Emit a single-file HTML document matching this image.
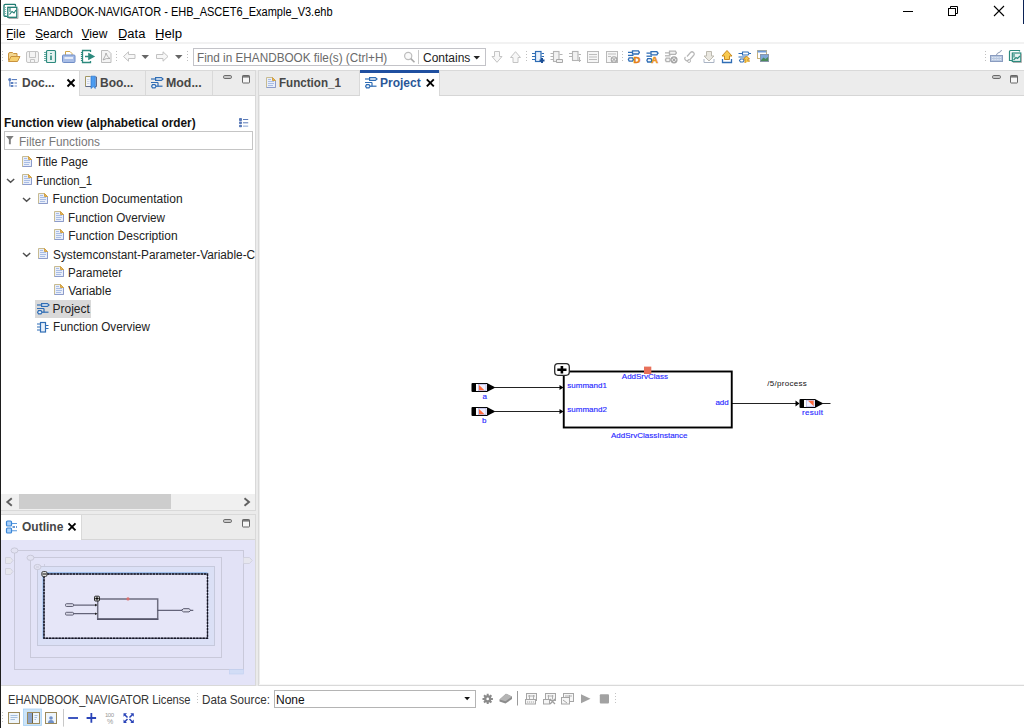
<!DOCTYPE html>
<html><head><meta charset="utf-8">
<style>
*{box-sizing:border-box;margin:0;padding:0}
html,body{width:1024px;height:728px;overflow:hidden;background:#fff}
body{position:relative;font-family:"Liberation Sans",sans-serif;font-size:12px;color:#000}
.a{position:absolute}
.t{position:absolute;white-space:nowrap;transform-origin:0 0;line-height:1;font-size:12px}
.b{font-weight:bold}
.ul{position:absolute;height:1px;background:#000}
svg{position:absolute;overflow:visible}
.tab{color:#474747}
</style></head><body>

<!-- window borders -->
<div class="a" style="left:0;top:0;width:1px;height:728px;background:#1e1e1e"></div>
<div class="a" style="left:1023px;top:0;width:1px;height:24px;background:#0b2255"></div>

<!-- title bar -->
<div class="t" style="left:23.7px;top:6px;transform:scaleX(0.918)">EHANDBOOK-NAVIGATOR - EHB_ASCET6_Example_V3.ehb</div>

<!-- menu bar -->
<div class="a" style="left:1px;top:24px;width:29px;height:1px;background:#e6e6e6"></div>
<div class="t" style="left:6px;top:28px">File</div>
<div class="t" style="left:35px;top:28px">Search</div>
<div class="t" style="left:81.5px;top:28px">View</div>
<div class="t" style="left:118px;top:28px;transform:scaleX(1.08)">Data</div>
<div class="t" style="left:155px;top:28px;transform:scaleX(1.1)">Help</div>
<div class="ul" style="left:7px;top:39px;width:6px"></div>
<div class="ul" style="left:36px;top:39px;width:7px"></div>
<div class="ul" style="left:82px;top:39px;width:7px"></div>
<div class="ul" style="left:119px;top:39px;width:7px"></div>
<div class="ul" style="left:156px;top:39px;width:7px"></div>
<div class="a" style="left:1px;top:42px;width:1023px;height:2px;background:#f2f2f2"></div>

<!-- toolbar search -->
<div class="a" style="left:193px;top:48px;width:293px;height:18px;border:1px solid #c3c3c8;background:#fff"></div>
<div class="a" style="left:418px;top:50px;width:1px;height:14px;background:#c8c8c8"></div>
<div class="t" style="left:197px;top:52px;color:#6a6a6a;transform:scaleX(0.979)">Find in EHANDBOOK file(s) (Ctrl+H)</div>
<div class="t" style="left:423px;top:52px;color:#222">Contains</div>

<!-- workbench background -->
<div class="a" style="left:1px;top:70px;width:1023px;height:616px;background:#ebebeb"></div>

<!-- left panel (Doc) -->
<div class="a" style="left:1px;top:70px;width:255px;height:441px;border:1px solid #d9d9d9;border-left:none;background:#fff"></div>
<div class="a" style="left:1px;top:71px;width:254px;height:25px;background:#ececec;border-bottom:1px solid #d6d6d6"></div>
<div class="a" style="left:1px;top:71px;width:78px;height:25px;background:#fff"></div>
<div class="a" style="left:79px;top:71px;width:1px;height:24px;background:#d9d9d9"></div>
<div class="a" style="left:145px;top:71px;width:1px;height:24px;background:#d9d9d9"></div>
<div class="a" style="left:212px;top:71px;width:1px;height:24px;background:#d9d9d9"></div>
<div class="t b tab" style="left:22px;top:77px">Doc...</div>
<div class="t b tab" style="left:100px;top:77px">Boo...</div>
<div class="t b tab" style="left:165.5px;top:77px;transform:scaleX(1.03)">Mod...</div>

<div class="t b" style="left:3.7px;top:117px;color:#111;transform:scaleX(0.984)">Function view (alphabetical order)</div>
<div class="a" style="left:4px;top:131px;width:249px;height:19px;border:1px solid #c5c5c5"></div>
<div class="t" style="left:18.8px;top:136px;color:#777;transform:scaleX(0.988)">Filter Functions</div>

<div class="a" style="left:35px;top:300px;width:56px;height:18px;background:#d9d9d9"></div>
<div class="t" style="left:36.3px;top:156px;color:#222;transform:scaleX(0.97)">Title Page</div>
<div class="t" style="left:36.3px;top:175px;color:#222;transform:scaleX(0.945)">Function_1</div>
<div class="t" style="left:52.5px;top:193px;color:#222">Function Documentation</div>
<div class="t" style="left:68.2px;top:212px;color:#222;transform:scaleX(0.976)">Function Overview</div>
<div class="t" style="left:68.2px;top:229.5px;color:#222">Function Description</div>
<div class="a" style="left:52px;top:246px;width:203px;height:16px;overflow:hidden"><div class="t" style="left:0.5px;top:3px;color:#222;transform:scaleX(0.985)">Systemconstant-Parameter-Variable-Class</div></div>
<div class="t" style="left:68.2px;top:266.5px;color:#222;transform:scaleX(0.964)">Parameter</div>
<div class="t" style="left:68.2px;top:284.5px;color:#222">Variable</div>
<div class="t" style="left:52.5px;top:303px;color:#222">Project</div>
<div class="t" style="left:52.5px;top:321px;color:#222;transform:scaleX(0.976)">Function Overview</div>

<!-- h scrollbar -->
<div class="a" style="left:1px;top:494px;width:254px;height:16px;background:#f0f0f0"></div>
<div class="a" style="left:19px;top:494px;width:152px;height:15px;background:#cdcdcd"></div>

<!-- right panel -->
<div class="a" style="left:258px;top:70px;width:766px;height:616px;border-left:1px solid #d9d9d9;border-top:1px solid #d9d9d9;border-bottom:1px solid #d9d9d9;background:#fff"></div>
<div class="a" style="left:259px;top:96px;width:1px;height:589px;background:#ededed"></div>
<div class="a" style="left:259px;top:684px;width:765px;height:1px;background:#f6f6f6"></div>
<div class="a" style="left:259px;top:71px;width:765px;height:25px;background:#ececec;border-bottom:1px solid #d6d6d6"></div>
<div class="a" style="left:359px;top:71px;width:1px;height:24px;background:#d9d9d9"></div>
<div class="a" style="left:360px;top:70px;width:79px;height:26px;background:#fff"></div>
<div class="a" style="left:360px;top:70px;width:79px;height:3px;background:#1f4fa0"></div>
<div class="a" style="left:439px;top:71px;width:1px;height:24px;background:#d9d9d9"></div>
<div class="t b tab" style="left:279.4px;top:77px;transform:scaleX(0.968)">Function_1</div>
<div class="t b" style="left:380px;top:77px;color:#2b5797">Project</div>

<!-- outline panel -->
<div class="a" style="left:1px;top:514px;width:255px;height:172px;border:1px solid #d9d9d9;border-left:none;background:#e4e4f8"></div>
<div class="a" style="left:1px;top:515px;width:254px;height:25px;background:#ececec;border-bottom:1px solid #d6d6d6"></div>
<div class="a" style="left:1px;top:515px;width:80px;height:25px;background:#fff"></div>
<div class="a" style="left:81px;top:515px;width:1px;height:24px;background:#d9d9d9"></div>
<div class="t b tab" style="left:22px;top:521px">Outline</div>

<!-- status bar -->
<div class="t" style="left:7.5px;top:694px;color:#333;transform:scaleX(0.928)">EHANDBOOK_NAVIGATOR License</div>
<div class="t" style="left:202px;top:694px;color:#333;transform:scaleX(0.971)">Data Source:</div>
<div class="a" style="left:274px;top:690px;width:202px;height:18px;border:1px solid #b4b4b4;background:#fff"></div>
<div class="t" style="left:276px;top:694px;color:#111">None</div>


<svg width="1024" height="728" viewBox="0 0 1024 728" style="left:0;top:0" fill="none">
<!-- app icon -->
<g stroke="#1f7b71" stroke-width="1.3">
<path d="M15.5 6.5 V5 Q15.5 4.3 14.8 4.3 H5.2 Q4 4.3 4 5.5 V15.5 Q4 16.3 5 16.3 H7"/>
<rect x="7.8" y="7.3" width="9" height="10" fill="#fff"/>
<path d="M10 8 V12 M9.5 14.5 L12 11.5 L14 13 L16 10" stroke-width="1.1"/>
</g>
<path d="M8.5 18.5 H18 V8.5" stroke="#b0b0b0" stroke-width="1"/>
<path d="M5.5 7 V16" stroke="#7fbcb4" stroke-width="1.2" stroke-dasharray="1 1"/>

<!-- window controls -->
<path d="M903 11.5 H913" stroke="#000" stroke-width="1"/>
<rect x="948.5" y="8.5" width="7" height="7" stroke="#000" stroke-width="1"/>
<path d="M950.5 8.5 V6.5 H957.5 V13.5 H955.5" stroke="#000" stroke-width="1"/>
<path d="M994 6 L1004 16 M1004 6 L994 16" stroke="#000" stroke-width="1.1"/>

<!-- ===== toolbar icons ===== -->
<g fill="#c0c0c0">
<rect x="2" y="51" width="1" height="1"/><rect x="2" y="54" width="1" height="1"/><rect x="2" y="57" width="1" height="1"/><rect x="2" y="60" width="1" height="1"/>
<rect x="116" y="51" width="1" height="1"/><rect x="116" y="54" width="1" height="1"/><rect x="116" y="57" width="1" height="1"/><rect x="116" y="60" width="1" height="1"/>
<rect x="187" y="51" width="1" height="1"/><rect x="187" y="54" width="1" height="1"/><rect x="187" y="57" width="1" height="1"/><rect x="187" y="60" width="1" height="1"/>
<rect x="526" y="51" width="1" height="1"/><rect x="526" y="54" width="1" height="1"/><rect x="526" y="57" width="1" height="1"/><rect x="526" y="60" width="1" height="1"/>
<rect x="622" y="51" width="1" height="1"/><rect x="622" y="54" width="1" height="1"/><rect x="622" y="57" width="1" height="1"/><rect x="622" y="60" width="1" height="1"/>
<rect x="985" y="51" width="1" height="1"/><rect x="985" y="54" width="1" height="1"/><rect x="985" y="57" width="1" height="1"/><rect x="985" y="60" width="1" height="1"/>
</g>
<!-- folder -->
<path d="M8.5 60.5 V54 Q8.5 52.5 10 52.5 H12.5 L13.5 53.5 H17 V56" fill="#f2d58e" stroke="#c9923e"/>
<path d="M8.5 61.5 L11 56.5 H20 L17.5 61.5 Z" fill="#f6cf6e" stroke="#c9923e"/>
<!-- save (disabled) -->
<rect x="26.5" y="51.5" width="12" height="11" rx="1.5" fill="#f4f4f4" stroke="#c4c4c4"/>
<path d="M29.5 52 V57.5 H35.5 V52 M30.5 62 V59.5 H34.5 V62" stroke="#c4c4c4"/>
<!-- notebook teal -->
<rect x="46.5" y="50.5" width="9" height="12" rx="1" fill="#e6f3f1" stroke="#2d8a7e" stroke-width="1.2"/>
<path d="M45 52 V61" stroke="#2d8a7e" stroke-width="1.4" stroke-dasharray="1 1"/>
<path d="M51 53 V54 M51 55.5 V60" stroke="#2d8a7e" stroke-width="1.6"/>
<!-- print -->
<path d="M65.5 51.5 H70 L72 53.5 V57 H65.5 Z" fill="#fff" stroke="#d1a84b"/>
<path d="M62.5 56 Q62.5 55 63.5 55 H74 Q75 55 75 56 V61.5 Q75 62.5 74 62.5 H63.5 Q62.5 62.5 62.5 61.5 Z" fill="#a8bde6" stroke="#6f8dc6"/>
<rect x="64.5" y="57" width="8.5" height="2" fill="#e6ecf8"/>
<!-- export teal -->
<path d="M90.5 52 V50.5 H82.5 V62.5 H90.5 V61" stroke="#2d8a7e" stroke-width="1.3"/>
<path d="M81.5 52 V61" stroke="#2d8a7e" stroke-width="1.2" stroke-dasharray="1 1"/>
<path d="M85 56.5 H90 M89 54 L93.5 56.5 L89 59 Z" stroke="#2d8a7e" stroke-width="1.6" fill="#2d8a7e"/>
<!-- pdf gray -->
<path d="M101.5 50.5 H108 L111 53.5 V62.5 H101.5 Z" fill="#f5f5f5" stroke="#bdbdbd"/>
<path d="M103 60 Q106 55 106 53 Q107 57 110 58.5 Q106 58 103 60" stroke="#a0a0a0" stroke-width="0.8"/>
<!-- back / fwd arrows -->
<path d="M123.5 56.5 L128.5 51.8 V54.5 H135 V58.5 H128.5 V61.2 Z" fill="#f7f7f7" stroke="#c2c2c2"/>
<path d="M141.5 55 H149 L145.25 59 Z" fill="#666"/>
<path d="M168 56.5 L163 51.8 V54.5 H156.5 V58.5 H163 V61.2 Z" fill="#f7f7f7" stroke="#c2c2c2"/>
<path d="M175 55 H182.5 L178.75 59 Z" fill="#666"/>
<!-- search magnifier -->
<circle cx="408.2" cy="56" r="3.6" stroke="#bdbdbd" stroke-width="1.2" fill="#fafafa"/>
<path d="M410.8 58.6 L414.5 62.3" stroke="#a8a8a8" stroke-width="1.6"/>
<!-- contains dropdown -->
<path d="M473.5 56 H480 L476.75 59.5 Z" fill="#222"/>
<!-- down/up arrows -->
<path d="M494.5 51.5 H499.5 V56.5 H502 L497 62.3 L492 56.5 H494.5 Z" fill="#f7f7f7" stroke="#c4c4c4"/>
<path d="M513 62.5 H518 V57.5 H520.5 L515.5 51.7 L510.5 57.5 H513 Z" fill="#f7f7f7" stroke="#c4c4c4"/>
<!-- chip blue with arrow -->
<rect x="535.5" y="51.5" width="5.5" height="10" fill="#e7f0fb" stroke="#2f6db5" stroke-width="1.2"/>
<path d="M532 53.5 H535 M532 56.5 H535 M532 59.5 H535 M541.5 53.5 H544 M541.5 56.5 H544" stroke="#2f6db5" stroke-width="1.2"/>
<path d="M539.5 60.5 H544.5 M542 58 V63 " stroke="#1c4f95" stroke-width="2"/>
<!-- chip gray 1 -->
<rect x="553.5" y="51.5" width="5.5" height="10" fill="#f2f2f2" stroke="#b4b4b4" stroke-width="1.1"/>
<path d="M550.5 53.5 H553 M550.5 56.5 H553 M550.5 59.5 H553 M559.5 54.5 H562.5" stroke="#b4b4b4" stroke-width="1.1"/>
<path d="M556.5 59.5 H562.5 V62.5 H556.5 Z" stroke="#a9a9a9" fill="#f0f0f0"/>
<!-- chip gray 2 -->
<rect x="572.5" y="51.5" width="5.5" height="9" fill="#f2f2f2" stroke="#b4b4b4" stroke-width="1.1"/>
<path d="M569 53.5 H572 M569 56.5 H572 M578.5 54.5 H581 M578 60.5 H581 M579.5 57 V62" stroke="#b4b4b4" stroke-width="1.1"/>
<!-- list gray -->
<rect x="587.5" y="51.5" width="11" height="11" fill="#f6f6f6" stroke="#b9b9b9"/>
<path d="M589 54.5 H597 M589 57 H597 M589 59.5 H597" stroke="#bdbdbd" stroke-width="1"/>
<rect x="606.5" y="51.5" width="11" height="11" fill="#f6f6f6" stroke="#b9b9b9"/>
<path d="M608 54 H616 M608 56.5 H611" stroke="#bdbdbd" stroke-width="1"/>
<circle cx="614" cy="59.5" r="2.8" stroke="#a8a8a8" stroke-width="1.1" fill="#eee"/>
<path d="M612.2 57.7 L615.8 61.3 M615.8 57.7 L612.2 61.3" stroke="#a0a0a0"/>
<!-- diagram blue D -->
<g stroke="#2f6db5" stroke-width="1.3" fill="none"><path d="M628 52.400000000000006 H632.3 M638.8 52.400000000000006 H640"/><path d="M632.5 50.800000000000004 H638.4 L639.3 52.400000000000006 L638.4 54.0 H632.5 Z" fill="#f4f8fd"/><path d="M628 55.400000000000006 H633.5"/><path d="M629.2 57.800000000000004 H632.5 L633.3 59.5 L632.5 61.2 H629.2 L628.4 59.5 Z" fill="#f4f8fd"/></g><text x="633.6" y="62.8" font-family="Liberation Sans" font-weight="bold" font-size="9.5" fill="#e8841c" stroke="#e07a10" stroke-width="0.5">D</text>
<g stroke="#2f6db5" stroke-width="1.3" fill="none"><path d="M646.5 53.2 H650.8 M657.3 53.2 H658.5"/><path d="M651.0 51.6 H656.9 L657.8 53.2 L656.9 54.8 H651.0 Z" fill="#f4f8fd"/><path d="M646.5 56.2 H652.0"/><path d="M647.7 58.6 H651.0 L651.8 60.3 L651.0 62 H647.7 L646.9 60.3 Z" fill="#f4f8fd"/></g><text x="651.2" y="62.8" font-family="Liberation Sans" font-weight="bold" font-size="9.5" fill="#f2a232" stroke="#e88a18" stroke-width="0.5">A</text>
<g stroke="#b4b4b4" stroke-width="1.3" fill="none"><path d="M665 52.800000000000004 H669.3 M675.8 52.800000000000004 H677"/><path d="M669.5 51.2 H675.4 L676.3 52.800000000000004 L675.4 54.4 H669.5 Z" fill="#f2f2f2"/><path d="M665 55.800000000000004 H670.5"/><path d="M666.2 58.2 H669.5 L670.3 59.900000000000006 L669.5 61.6 H666.2 L665.4 59.900000000000006 Z" fill="#f2f2f2"/></g><circle cx="674" cy="59.8" r="3" stroke="#a4a4a4" stroke-width="1.2" fill="#e6e6e6"/><path d="M672.2 58 L675.8 61.6 M675.8 58 L672.2 61.6" stroke="#9a9a9a"/>
<!-- link gray -->
<path d="M687 56.5 L690.5 52.5 Q692 51 693.5 52.5 Q695 54 693.5 55.5 L690 59.5 M685.5 57 Q684 58.5 685.5 60 Q687 61.5 688.5 60" stroke="#b8b8b8" stroke-width="1.2"/>
<circle cx="689" cy="61" r="1.5" stroke="#b8b8b8"/>
<!-- download gray -->
<path d="M706.5 51.5 H711.5 V56 H714 L709 61 L704 56 H706.5 Z" fill="#e9e7e0" stroke="#bdbab0"/>
<path d="M704 59 V62.5 H714 V59" stroke="#aab4c4"/>
<!-- up orange -->
<path d="M724.5 59.5 V56 H722 L727 50.5 L732 56 H729.5 V59.5 Z" fill="#f8c94f" stroke="#c98a1f"/>
<path d="M722.5 59 V62.5 H731.5 V59" stroke="#2f6db5" stroke-width="1.3"/>
<!-- diagram blue + orange -->
<g stroke="#2f6db5" stroke-width="1.1">
<path d="M738.5 53.5 H742.5 M748.5 53.5 H751 M738.5 57 H746 M742.5 52 H748 L749 53.5 L748 55 H742.5 Z M739.5 60.5 L740.5 59 H743 L744 60.5 L743 62 H740.5 Z"/>
</g>
<path d="M745 63 V59 H743.5 L746.5 56 L749.5 59 H748 V61 H750" stroke="#c98a1f" fill="#f8c94f" stroke-width="1"/>
<!-- window picture -->
<rect x="757.5" y="50.5" width="9" height="8" fill="#fff" stroke="#c9b27a"/>
<rect x="757.5" y="50.5" width="9" height="2" fill="#6f9bd8"/>
<rect x="760.5" y="54.5" width="8" height="7" fill="#7fa7d8" stroke="#8a97aa"/>
<path d="M761 60 L763.5 57.5 L765.5 59 L768 57 V61 H761 Z" fill="#4a8a5a"/>
<!-- keyboard -->
<rect x="990.5" y="55.5" width="12" height="6" fill="#b8c8e0" stroke="#8a9cc0"/>
<path d="M992 57.5 H1001 M992 59.5 H1001" stroke="#e8eef8" stroke-width="0.8" stroke-dasharray="1 0.6"/>
<path d="M996.5 55 Q997 53 999 52.5 Q1001 52 1001.5 50" stroke="#7a8aa8" stroke-width="0.9"/>
<!-- app icon small -->
<g stroke="#2d8a7e" stroke-width="1.2">
<path d="M1019.5 51.5 V50.5 H1010.5 Q1009.5 50.5 1009.5 51.5 V60.5 H1012"/>
<rect x="1012.3" y="53" width="8.5" height="8.5" fill="#e6f3f1"/>
<path d="M1014 54 V57.5 M1013.5 60 L1016 57.5 L1017.5 58.5 L1020 56"/>
</g>
<path d="M1013 62.5 H1021.5 V54" stroke="#b0b0b0"/>
<!-- ===== panel icons ===== -->
<g transform="translate(22,156)"><path d="M0.5 0.5 H6.5 L9.5 3.5 V10.5 H0.5 Z" fill="#e9eef9" stroke="#c8bb90"/><path d="M0.5 10.5 H9.5 V4" stroke="#8c9ccc"/><path d="M6.5 0.5 V3.5 H9.5 Z" fill="#e5b65a" stroke="#d2a246"/><path d="M2 2.5 H5 M2 4.5 H8 M2 6.5 H8 M2 8.5 H7" stroke="#a9bde4" stroke-width="1"/></g><path d="M7.0 179.0 L10.6 182.2 L14.2 179.0" stroke="#505050" stroke-width="1.5"/><g transform="translate(22,174)"><path d="M0.5 0.5 H6.5 L9.5 3.5 V10.5 H0.5 Z" fill="#e9eef9" stroke="#c8bb90"/><path d="M0.5 10.5 H9.5 V4" stroke="#8c9ccc"/><path d="M6.5 0.5 V3.5 H9.5 Z" fill="#e5b65a" stroke="#d2a246"/><path d="M2 2.5 H5 M2 4.5 H8 M2 6.5 H8 M2 8.5 H7" stroke="#a9bde4" stroke-width="1"/></g><path d="M23.0 198.0 L26.6 201.2 L30.2 198.0" stroke="#505050" stroke-width="1.5"/><g transform="translate(38,193)"><path d="M0.5 0.5 H6.5 L9.5 3.5 V10.5 H0.5 Z" fill="#e9eef9" stroke="#c8bb90"/><path d="M0.5 10.5 H9.5 V4" stroke="#8c9ccc"/><path d="M6.5 0.5 V3.5 H9.5 Z" fill="#e5b65a" stroke="#d2a246"/><path d="M2 2.5 H5 M2 4.5 H8 M2 6.5 H8 M2 8.5 H7" stroke="#a9bde4" stroke-width="1"/></g><g transform="translate(54,211)"><path d="M0.5 0.5 H6.5 L9.5 3.5 V10.5 H0.5 Z" fill="#e9eef9" stroke="#c8bb90"/><path d="M0.5 10.5 H9.5 V4" stroke="#8c9ccc"/><path d="M6.5 0.5 V3.5 H9.5 Z" fill="#e5b65a" stroke="#d2a246"/><path d="M2 2.5 H5 M2 4.5 H8 M2 6.5 H8 M2 8.5 H7" stroke="#a9bde4" stroke-width="1"/></g><g transform="translate(54,229)"><path d="M0.5 0.5 H6.5 L9.5 3.5 V10.5 H0.5 Z" fill="#e9eef9" stroke="#c8bb90"/><path d="M0.5 10.5 H9.5 V4" stroke="#8c9ccc"/><path d="M6.5 0.5 V3.5 H9.5 Z" fill="#e5b65a" stroke="#d2a246"/><path d="M2 2.5 H5 M2 4.5 H8 M2 6.5 H8 M2 8.5 H7" stroke="#a9bde4" stroke-width="1"/></g><path d="M23.0 253.0 L26.6 256.2 L30.2 253.0" stroke="#505050" stroke-width="1.5"/><g transform="translate(38,248)"><path d="M0.5 0.5 H6.5 L9.5 3.5 V10.5 H0.5 Z" fill="#e9eef9" stroke="#c8bb90"/><path d="M0.5 10.5 H9.5 V4" stroke="#8c9ccc"/><path d="M6.5 0.5 V3.5 H9.5 Z" fill="#e5b65a" stroke="#d2a246"/><path d="M2 2.5 H5 M2 4.5 H8 M2 6.5 H8 M2 8.5 H7" stroke="#a9bde4" stroke-width="1"/></g><g transform="translate(54,266)"><path d="M0.5 0.5 H6.5 L9.5 3.5 V10.5 H0.5 Z" fill="#e9eef9" stroke="#c8bb90"/><path d="M0.5 10.5 H9.5 V4" stroke="#8c9ccc"/><path d="M6.5 0.5 V3.5 H9.5 Z" fill="#e5b65a" stroke="#d2a246"/><path d="M2 2.5 H5 M2 4.5 H8 M2 6.5 H8 M2 8.5 H7" stroke="#a9bde4" stroke-width="1"/></g><g transform="translate(54,284)"><path d="M0.5 0.5 H6.5 L9.5 3.5 V10.5 H0.5 Z" fill="#e9eef9" stroke="#c8bb90"/><path d="M0.5 10.5 H9.5 V4" stroke="#8c9ccc"/><path d="M6.5 0.5 V3.5 H9.5 Z" fill="#e5b65a" stroke="#d2a246"/><path d="M2 2.5 H5 M2 4.5 H8 M2 6.5 H8 M2 8.5 H7" stroke="#a9bde4" stroke-width="1"/></g><g transform="translate(37,303)" stroke="#2f6db5" stroke-width="1.2" fill="none"><path d="M0 2 H4"/><path d="M4.6 0.6 H10.4 L12 2 L10.4 3.4 H4.6 Z" fill="#eef4fb"/><path d="M0 5.5 H7 M7 5.5 V9.5"/><path d="M1.5 7.6 H4 L5 9.2 L4 10.8 H1.5 L0.6 9.2 Z" fill="#eef4fb"/><path d="M5 9.2 H11.5"/></g><g stroke="#2f6db5" stroke-width="1.2"><rect x="40.5" y="322.5" width="5" height="9.5" fill="#e8f0fa"/><path d="M37 324 H40 M37 327 H40 M37 330 H40 M46 325.5 H48.5 M46 328.5 H48.5"/></g><g fill="#5b7fbf"><circle cx="9.8" cy="79.6" r="1.6"/><rect x="12" y="79" width="5" height="1.1"/><rect x="9.3" y="80" width="1" height="6.5"/><rect x="10.5" y="82" width="3" height="2" rx="0.8"/><rect x="14.5" y="82.5" width="2.5" height="1"/><rect x="10.5" y="85" width="3" height="2" rx="0.8"/><rect x="14.5" y="85.3" width="2.5" height="1.4" fill="#9fb3dd"/></g><path d="M85.5 86.5 V76.5 H90.5" stroke="#a39864" fill="none"/><rect x="86" y="77" width="5" height="9.5" fill="#f2f5fb"/><path d="M85.5 86.5 H91 M95.5 77 H96.5 V86.5 H95" stroke="#5f6a88" fill="none"/><path d="M87 79.5 H89.5 M87 81.5 H89.5 M87 83.5 H89.5" stroke="#c4cee3" stroke-width="0.8"/><path d="M91 76.2 H95.3 V88.5 L93.2 86.6 L91 88.5 Z" fill="#4b9cf2" stroke="#2a72cc" stroke-width="0.7"/><g transform="translate(151,77)" stroke="#2f6db5" stroke-width="1.2" fill="none"><path d="M0 2 H4"/><path d="M4.6 0.6 H10.4 L12 2 L10.4 3.4 H4.6 Z" fill="#eef4fb"/><path d="M0 5.5 H7 M7 5.5 V9.5"/><path d="M1.5 7.6 H4 L5 9.2 L4 10.8 H1.5 L0.6 9.2 Z" fill="#eef4fb"/><path d="M5 9.2 H11.5"/></g><g transform="translate(365,77)" stroke="#2f6db5" stroke-width="1.2" fill="none"><path d="M0 2 H4"/><path d="M4.6 0.6 H10.4 L12 2 L10.4 3.4 H4.6 Z" fill="#eef4fb"/><path d="M0 5.5 H7 M7 5.5 V9.5"/><path d="M1.5 7.6 H4 L5 9.2 L4 10.8 H1.5 L0.6 9.2 Z" fill="#eef4fb"/><path d="M5 9.2 H11.5"/></g><g transform="translate(266,77)"><path d="M0.5 0.5 H6.5 L9.5 3.5 V10.5 H0.5 Z" fill="#e9eef9" stroke="#c8bb90"/><path d="M0.5 10.5 H9.5 V4" stroke="#8c9ccc"/><path d="M6.5 0.5 V3.5 H9.5 Z" fill="#e5b65a" stroke="#d2a246"/><path d="M2 2.5 H5 M2 4.5 H8 M2 6.5 H8 M2 8.5 H7" stroke="#a9bde4" stroke-width="1"/></g><path d="M67.5 79.5 L74.5 86.5 M74.5 79.5 L67.5 86.5" stroke="#000" stroke-width="1.9"/><path d="M426.8 79.3 L433.8 86.3 M433.8 79.3 L426.8 86.3" stroke="#000" stroke-width="1.9"/><path d="M68.5 523.3 L75.5 530.3 M75.5 523.3 L68.5 530.3" stroke="#000" stroke-width="1.9"/><g><rect x="6.5" y="521" width="5" height="5" rx="1" fill="#a9d1fb" stroke="#3b86d6" stroke-width="1.2"/><rect x="6.5" y="528" width="5" height="5" rx="1" fill="#a9d1fb" stroke="#3b86d6" stroke-width="1.2"/><path d="M12 523.5 H17 M12 530.8 H17" stroke="#5b9be0" stroke-width="1.1"/><path d="M12.5 527 H15 M16 527 H17" stroke="#3b7ac6" stroke-width="1.5"/></g><rect x="223.5" y="75.5" width="8" height="3" rx="1.3" fill="#c9c9c9" stroke="#6a6a6a" stroke-width="1"/><rect x="242.5" y="75.5" width="7" height="7.5" rx="0.6" fill="#f6f6f6" stroke="#666" stroke-width="1"/><rect x="243" y="76" width="6" height="1.6" fill="#7a7a7a"/><rect x="992.5" y="75.5" width="8" height="3" rx="1.3" fill="#c9c9c9" stroke="#6a6a6a" stroke-width="1"/><rect x="1010.5" y="75.5" width="7" height="7.5" rx="0.6" fill="#f6f6f6" stroke="#666" stroke-width="1"/><rect x="1011" y="76" width="6" height="1.6" fill="#7a7a7a"/><rect x="223.5" y="519.5" width="8" height="3" rx="1.3" fill="#c9c9c9" stroke="#6a6a6a" stroke-width="1"/><rect x="242.5" y="519.5" width="7" height="7.5" rx="0.6" fill="#f6f6f6" stroke="#666" stroke-width="1"/><rect x="243" y="520" width="6" height="1.6" fill="#7a7a7a"/><path d="M6 136 H13.7 L10.8 139.5 V144.3 H8.9 V139.5 Z" fill="#7d7d7d"/><g fill="#5a7ab8"><rect x="239" y="118" width="3" height="3" rx="0.8"/><rect x="239" y="121.5" width="3" height="2.5" rx="0.8"/><rect x="239" y="124.7" width="3" height="2.5" rx="0.8"/><rect x="243" y="119" width="5.2" height="1"/><rect x="243" y="122.3" width="5.2" height="1"/><rect x="243" y="125.5" width="5.2" height="1.3" fill="#a4b8dc"/></g><path d="M11.8 498.2 L7.3 502 L11.8 505.8" stroke="#606060" stroke-width="1.9"/><path d="M244.5 498.2 L249 502 L244.5 505.8" stroke="#606060" stroke-width="1.9"/>
<!-- ===== status bar ===== -->
<g fill="#c4c4c4">
<rect x="197" y="693" width="1" height="1"/><rect x="197" y="696" width="1" height="1"/><rect x="197" y="699" width="1" height="1"/><rect x="197" y="702" width="1" height="1"/>
<rect x="615" y="693" width="1" height="1"/><rect x="615" y="696" width="1" height="1"/><rect x="615" y="699" width="1" height="1"/><rect x="615" y="702" width="1" height="1"/>
<rect x="2" y="712" width="1" height="1"/><rect x="2" y="715" width="1" height="1"/><rect x="2" y="718" width="1" height="1"/><rect x="2" y="721" width="1" height="1"/>
</g>
<path d="M464.3 697 H470 L467.15 700.2 Z" fill="#111"/>
<g transform="translate(487.7,698.9)" fill="#8a8a8a"><circle r="3.6"/><path d="M-1 -5.2 H1 V5.2 H-1 Z M-5.2 -1 H5.2 V1 H-5.2 Z" /><path d="M-1 -5.2 H1 V5.2 H-1 Z M-5.2 -1 H5.2 V1 H-5.2 Z" transform="rotate(45)"/><circle r="1.3" fill="#fff"/></g>
<path d="M499.5 699.5 L506 693.8 L512 696.5 V699 L505.5 703.6 L499.5 701.5 Z" fill="#8c8c8c"/>
<path d="M499.5 699.5 L506 693.8 L512 696.5 L505.5 701.3 Z" fill="#b5b5b5"/>
<path d="M517.5 691 V705.5" stroke="#9a9a9a" stroke-width="1"/>
<g stroke="#a6a6a6" stroke-width="1" fill="#f6f6f6">
<rect x="526.5" y="693.5" width="10" height="7"/><path d="M528 696 H535 M529.5 695 V699.5 M533.5 695 V699.5" fill="none" stroke="#b0b0b0"/>
<rect x="525.5" y="699.5" width="10" height="4.5"/><path d="M527 702 H534" fill="none" stroke-dasharray="1.2 0.8"/>
<rect x="545.5" y="693.5" width="10" height="7"/><path d="M547.5 696 H553.5 M548.5 695 V699.5 M552.5 695 V699.5" fill="none" stroke="#b0b0b0"/>
<rect x="543.5" y="699.5" width="6" height="4.5"/><path d="M550 699 L555 704 M555 699 L550 704" fill="none" stroke="#a0a0a0" stroke-width="1.3"/>
<rect x="563.5" y="693.5" width="10" height="8"/><path d="M565 696 H572 M569.5 695 V700" fill="none" stroke="#b0b0b0"/>
<rect x="561.5" y="697.5" width="8" height="6.5"/><path d="M563 700 L567 703" fill="none"/>
</g>
<path d="M581 694.3 L590.5 698.8 L581 703.2 Z" fill="#a2a2a2"/>
<rect x="599.8" y="694.3" width="9.2" height="9.2" rx="1" fill="#a2a2a2"/>
<!-- second row -->
<rect x="23.5" y="709" width="18" height="16.5" fill="#cce4f8" stroke="#a6d0f4" stroke-width="0.8"/>
<g stroke="#9c8a5c" stroke-width="1">
<rect x="8.5" y="712.5" width="11" height="11" fill="#eef5fb"/>
<rect x="27.5" y="712.5" width="12" height="11" fill="#eef5fb"/>
<rect x="45.5" y="712.5" width="11" height="11" fill="#eef5fb"/>
</g>
<path d="M10.5 715.5 H17.5 M10.5 717.5 H17.5 M10.5 719.5 H15" stroke="#a6bfdc" stroke-width="1"/>
<rect x="28" y="713" width="4.5" height="10" fill="#8aa4cc"/>
<path d="M32.5 713 V723" stroke="#6a6040"/>
<path d="M34.5 715.5 H37.5 M34.5 717.5 H37 M34.5 719.5 H36" stroke="#a6bfdc"/>
<circle cx="51" cy="718" r="1.8" fill="#6f90c8"/>
<path d="M48 723 Q48 720 51 720 Q54 720 54 723 Z" fill="#6f90c8"/>
<path d="M63.5 709 V726.6" stroke="#c8c8c8" stroke-width="1"/>
<path d="M68.2 718 H78" stroke="#2a44b8" stroke-width="1.8"/>
<path d="M86.6 718 H96.1 M91.35 713 V722.8" stroke="#2a44b8" stroke-width="1.8"/>
<text x="105" y="717" font-family="Liberation Sans" font-size="6" fill="#999" textLength="9">100</text>
<text x="107" y="724" font-family="Liberation Sans" font-size="7" fill="#999">%</text>
<g stroke="#2a44b8" stroke-width="1.5" fill="#2a44b8">
<path d="M124.5 714.5 L127.5 717.5 M132.5 714.5 L129.5 717.5 M124.5 722 L127.5 719 M132.5 722 L129.5 719" />
<path d="M123.5 713.2 H127 L123.5 716.7 Z M133.8 713.2 H130.3 L133.8 716.7 Z M123.5 723.1 H127 L123.5 719.6 Z M133.8 723.1 H130.3 L133.8 719.6 Z" stroke="none"/>
</g>
<!-- ===== outline diagram ===== -->
<rect x="14.5" y="550.5" width="229" height="119" stroke="#c9c9da" stroke-width="1" fill="#e2e2f6"/>
<rect x="30.5" y="557.5" width="191" height="100" stroke="#c9c9da" stroke-width="1" fill="#e3e3f7"/>
<rect x="37.5" y="566.5" width="177" height="79" stroke="#c6c9dc" stroke-width="1" fill="#dbe0f6"/>
<ellipse cx="14.5" cy="550.5" rx="3.5" ry="2.6" fill="#e2e2f2" stroke="#c5c5d5" stroke-width="0.9"/>
<ellipse cx="30.5" cy="557.8" rx="3.5" ry="2.6" fill="#e2e2f2" stroke="#c5c5d5" stroke-width="0.9"/>
<ellipse cx="37.5" cy="567" rx="3.5" ry="2.6" fill="#e2e2f2" stroke="#c5c5d5" stroke-width="0.9"/>
<path d="M36 567 H39" stroke="#c5c5d5" stroke-width="0.8"/>
<path d="M44.5 564 V566" stroke="#c9c9d9" stroke-width="0.8"/>
<path d="M5.5 557.5 H10.5 L13 560.5 L10.5 563.5 H5.5 Z M5.5 568.5 H10.5 L13 571.5 L10.5 574.5 H5.5 Z M243.5 557.5 H249.5 L252.3 560.5 L249.5 563.5 H243.5" fill="#e6e6ee" stroke="#cfcfdc" stroke-width="0.9"/>
<rect x="229.5" y="669.5" width="14" height="4.5" fill="#d2ddf6" stroke="#c0cff0" stroke-width="0.6"/>
<path d="M43.5 638.5 V573.2 H207.5" stroke="#9fc0ef" stroke-width="2.2"/>
<rect x="44" y="574" width="163.5" height="64.2" fill="#e6e6f8" stroke="#3a3a4c" stroke-width="0.9"/><rect x="44" y="574" width="163.5" height="64.2" fill="none" stroke="#141424" stroke-width="1.5" stroke-dasharray="2.2 1"/>
<rect x="41.8" y="571.5" width="5.2" height="5" rx="1.5" fill="#ddd" stroke="#333" stroke-width="0.9"/>
<path d="M42.5 574 H46.5" stroke="#111" stroke-width="1"/>
<rect x="97.7" y="599" width="60" height="20" fill="none" stroke="#6e6e80" stroke-width="1.5"/>
<path d="M97 619.3 H158.3" stroke="#55556a" stroke-width="1.6"/>
<rect x="94.5" y="596.2" width="5" height="4.8" rx="1" fill="#ccc" stroke="#222" stroke-width="1"/>
<path d="M95.3 598.6 H98.7 M97 597 V600.2" stroke="#000" stroke-width="1"/>
<circle cx="128" cy="598.9" r="1.6" fill="#d87070"/>
<rect x="65.5" y="603.7" width="8" height="2.8" rx="1" fill="#d7d7e6" stroke="#55556a" stroke-width="0.9"/>
<rect x="65.5" y="612.3" width="8" height="2.8" rx="1" fill="#d7d7e6" stroke="#55556a" stroke-width="0.9"/>
<path d="M73.5 605.1 H96.5 M73.5 613.7 H96.5 M157.7 610.3 H182 M190.5 610.3 H193.3" stroke="#44445a" stroke-width="1"/>
<path d="M95 603.8 L97.5 605.1 L95 606.4 Z M95 612.4 L97.5 613.7 L95 615 Z" fill="#222"/>
<path d="M181.5 610.3 L183.5 608.7 H189 L190.8 610.3 L189 611.9 H183.5 Z" fill="#e0e0ee" stroke="#44445a" stroke-width="0.9"/>
<!-- ===== editor diagram ===== -->
<path d="M471.5 384 Q471.5 383 472.5 383 H487 L495.5 387.5 L487 392 H472.5 Q471.5 392 471.5 391 Z" fill="#000"/>
<rect x="476" y="384" width="11" height="7" fill="#fafafa"/>
<rect x="478.5" y="384.3" width="7.5" height="6.4" fill="#eef" stroke="#b0b0e0" stroke-width="0.7"/><path d="M479 385 V390.3 H484.5 Z" fill="#ff6b3d"/><path d="M471.5 408 Q471.5 407 472.5 407 H487 L495.5 411.5 L487 416 H472.5 Q471.5 416 471.5 415 Z" fill="#000"/>
<rect x="476" y="408" width="11" height="7" fill="#fafafa"/>
<rect x="478.5" y="408.3" width="7.5" height="6.4" fill="#eef" stroke="#b0b0e0" stroke-width="0.7"/><path d="M479 409 V414.3 H484.5 Z" fill="#ff6b3d"/><path d="M799.5 400 Q799.5 399 800.5 399 H815 L823.5 403.5 L815 408 H800.5 Q799.5 408 799.5 407 Z" fill="#000"/>
<rect x="804" y="400" width="11" height="7" fill="#fafafa"/>
<rect x="806.5" y="400.3" width="7.5" height="6.4" fill="#eef" stroke="#b0b0e0" stroke-width="0.7"/><path d="M808 400.7 H813.6 V406 Z" fill="#ff6b3d"/>
<path d="M495 387.5 H561 M495 411.5 H561 M732 403.5 H796 M823 403.5 H830.5" stroke="#222" stroke-width="1"/>
<path d="M559.5 385 L563.5 387.5 L559.5 390 Z M559.5 409 L563.5 411.5 L559.5 414 Z M795.5 400.5 L799.5 403.5 L795.5 406.5 Z" fill="#000"/>
<rect x="563.75" y="371.5" width="168" height="56" stroke="#000" stroke-width="1.9" fill="none"/>
<rect x="554.7" y="363.7" width="14.6" height="11.6" rx="3.2" fill="#fff" stroke="#2a2a2a" stroke-width="1.3"/>
<path d="M557.3 369.7 H566.5 M561.9 365.9 V373.4" stroke="#000" stroke-width="2.6"/>
<rect x="644" y="366.6" width="7.3" height="7.4" fill="#e8705a"/>
<g font-family="Liberation Sans" font-size="8" fill="#2a2aff" stroke="#2a2aff" stroke-width="0.15">
<text x="567.3" y="388.3">summand1</text>
<text x="567.3" y="412.3">summand2</text>
<text x="621.8" y="379.3">AddSrvClass</text>
<text x="715.4" y="404.6">add</text>
<text x="611" y="438.4">AddSrvClassInstance</text>
<text x="482.4" y="399">a</text>
<text x="482" y="422.8">b</text>
<text x="802" y="414.5" textLength="21">result</text>
</g>
<text x="767.3" y="386.4" font-family="Liberation Sans" font-size="8" fill="#111" textLength="39.5">/5/process</text>
</svg>

</body></html>
